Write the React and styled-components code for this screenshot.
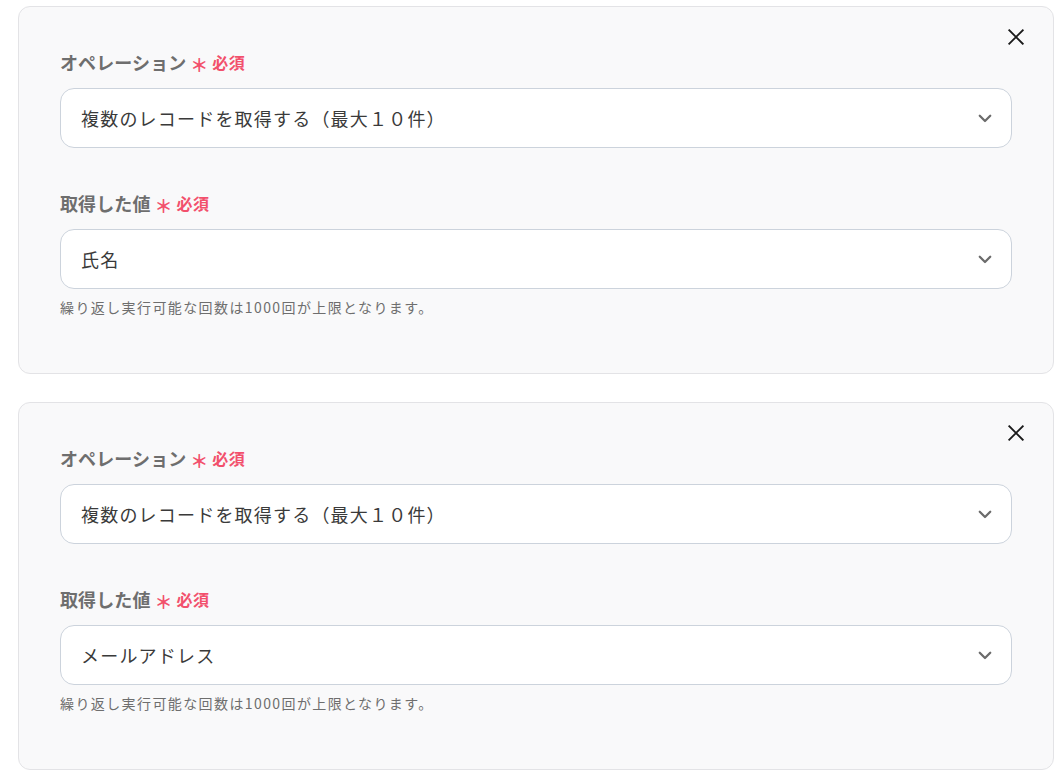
import React from "react";
import styled, { createGlobalStyle } from "styled-components";

const Global = createGlobalStyle`
  html, body { margin: 0; padding: 0; background: #ffffff; }
  body { font-family: "Noto Sans CJK JP", "Noto Sans", sans-serif; }
  * { box-sizing: border-box; }
`;

const Page = styled.div`
  display: flex;
  flex-direction: column;
  gap: 28px;
  padding: 6px 10px 0 18px;
  width: 1064px;
`;

const Card = styled.section`
  position: relative;
  background: #f9f9fa;
  border: 1px solid #e3e3e6;
  border-radius: 12px;
  padding: 42px 41px 57px 41px;
  display: flex;
  flex-direction: column;
  height: 368px;
`;

const CloseButton = styled.button`
  position: absolute;
  top: 17px;
  right: 24px;
  width: 26px;
  height: 26px;
  border: none;
  background: transparent;
  padding: 0;
  display: flex;
  align-items: center;
  justify-content: center;
  cursor: pointer;
  color: #222;
`;

const Field = styled.div`
  display: flex;
  flex-direction: column;
  margin-top: ${(p) => (p.$first ? "0" : "42px")};
`;

const Label = styled.div`
  display: flex;
  align-items: center;
  height: 26px;
  font-size: 18px;
  font-weight: 700;
  color: #6e6e6e;
  letter-spacing: 0.1px;
`;

const Required = styled.span`
  display: inline-flex;
  align-items: center;
  color: #f2506c;
  font-size: 16px;
  font-weight: 600;
  margin-left: 4px;
  gap: 4px;
  letter-spacing: 0.5px;
`;

const Asterisk = styled.span`
  font-size: 18px;
  font-weight: 700;
  line-height: 1;
  position: relative;
  top: 2px;
  letter-spacing: 0;
`;

const Select = styled.div`
  margin-top: 13px;
  height: 60px;
  background: #ffffff;
  border: 1px solid #ccd3dc;
  border-radius: 14px;
  display: flex;
  align-items: center;
  justify-content: space-between;
  padding: 0 17px 0 20px;
  font-size: 18px;
  color: #3a3a3a;
  letter-spacing: 1.2px;
`;

const Help = styled.div`
  margin-top: 8px;
  font-size: 14px;
  color: #6e6e6e;
  letter-spacing: 1.4px;
`;

const Chevron = () => (
  <svg width="18" height="18" viewBox="0 0 24 24" fill="none" stroke="#6b6b6b" strokeWidth="3" strokeLinecap="round" strokeLinejoin="round">
    <path d="M5 9l7 7 7-7" />
  </svg>
);

const XIcon = () => (
  <svg width="18" height="18" viewBox="0 0 24 24" fill="none" stroke="#1a1a1a" strokeWidth="2.4" strokeLinecap="square">
    <path d="M3 3L21 21M21 3L3 21" />
  </svg>
);

const Block = ({ value }) => (
  <Card>
    <CloseButton aria-label="close"><XIcon /></CloseButton>
    <Field $first>
      <Label>
        オペレーション
        <Required><Asterisk>＊</Asterisk>必須</Required>
      </Label>
      <Select>
        <span>複数のレコードを取得する（最大１０件）</span>
        <Chevron />
      </Select>
    </Field>
    <Field>
      <Label>
        取得した値
        <Required><Asterisk>＊</Asterisk>必須</Required>
      </Label>
      <Select>
        <span>{value}</span>
        <Chevron />
      </Select>
      <Help>繰り返し実行可能な回数は1000回が上限となります。</Help>
    </Field>
  </Card>
);

export default function App() {
  return (
    <>
      <Global />
      <Page>
        <Block value="氏名" />
        <Block value="メールアドレス" />
      </Page>
    </>
  );
}
